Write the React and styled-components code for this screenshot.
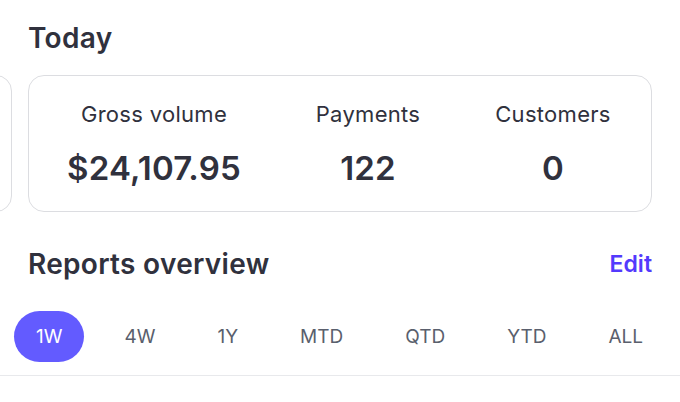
import styled, { createGlobalStyle } from 'styled-components';

const GlobalStyle = createGlobalStyle`
  html, body {
    margin: 0;
    padding: 0;
    background: #ffffff;
  }

  body {
    font-family: Inter, "Noto Sans", "Liberation Sans", sans-serif;
    color: #30313d;
    -webkit-font-smoothing: antialiased;
  }
`;

const Screen = styled.div`
  width: 680px;
  height: 402px;
  overflow: hidden;
  background: #ffffff;
`;

const SectionTitle = styled.h2`
  margin: 0;
  font-size: 28px;
  line-height: 34px;
  font-weight: 600;
  letter-spacing: 0.3px;
  color: #30313d;
`;

const TodayHeader = styled.div`
  padding: 21px 28px 0;
`;

const Carousel = styled.div`
  margin-top: 20px;
  overflow: hidden;
`;

const Track = styled.div`
  display: flex;
  gap: 16px;
  margin-left: -612px;
`;

const Card = styled.div`
  flex: 0 0 624px;
  height: 137px;
  box-sizing: border-box;
  border: 1.5px solid #dcdde1;
  border-radius: 16px;
  display: grid;
  grid-template-columns: 250px 178px 1fr;
  align-items: center;
  padding: 0 2px 0 0;
`;

const Stat = styled.div`
  display: flex;
  flex-direction: column;
  align-items: center;
  gap: 22px;
  margin-top: 1px;
`;

const StatLabel = styled.span`
  font-size: 22px;
  line-height: 26px;
  font-weight: 400;
  letter-spacing: 0.3px;
  color: #30313d;
`;

const StatValue = styled.span`
  font-size: 33px;
  line-height: 38px;
  font-weight: 600;
  letter-spacing: 0.2px;
  color: #30313d;
`;

const ReportsHeader = styled.div`
  display: flex;
  align-items: center;
  justify-content: space-between;
  padding: 35px 28px 0;
`;

const EditLink = styled.a`
  font-size: 23px;
  font-weight: 600;
  color: #533afd;
  text-decoration: none;
  cursor: pointer;
`;

const Tabs = styled.div`
  display: flex;
  align-items: center;
  gap: 18px;
  padding: 30px 14px 13px;
  border-bottom: 1.5px solid #e8e9ec;
`;

const Tab = styled.button`
  height: 51px;
  padding: 0 22px;
  border: none;
  border-radius: 26px;
  background: ${({ $active }) => ($active ? '#635bff' : 'transparent')};
  color: ${({ $active }) => ($active ? '#ffffff' : '#5a5f6d')};
  font-family: inherit;
  font-size: 19px;
  font-weight: 400;
  cursor: pointer;
`;

const stats = [
  { label: 'Gross volume', value: '$24,107.95' },
  { label: 'Payments', value: '122' },
  { label: 'Customers', value: '0' },
];

const ranges = ['1W', '4W', '1Y', 'MTD', 'QTD', 'YTD', 'ALL'];

function App() {
  return (
    <>
      <GlobalStyle />
      <Screen>
        <TodayHeader>
          <SectionTitle>Today</SectionTitle>
        </TodayHeader>

        <Carousel>
          <Track>
            <Card />
            <Card>
              {stats.map((s) => (
                <Stat key={s.label}>
                  <StatLabel>{s.label}</StatLabel>
                  <StatValue>{s.value}</StatValue>
                </Stat>
              ))}
            </Card>
          </Track>
        </Carousel>

        <ReportsHeader>
          <SectionTitle>Reports overview</SectionTitle>
          <EditLink>Edit</EditLink>
        </ReportsHeader>

        <Tabs>
          {ranges.map((r, i) => (
            <Tab key={r} $active={i === 0}>{r}</Tab>
          ))}
        </Tabs>
      </Screen>
    </>
  );
}

export default App;
